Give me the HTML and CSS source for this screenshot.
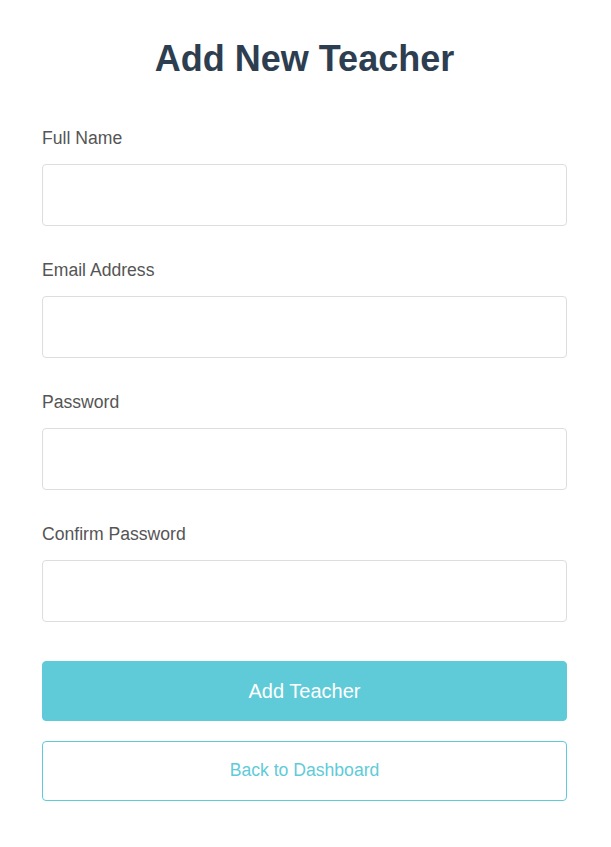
FILE: index.html
```html
<!DOCTYPE html>
<html lang="en">
<head>
<meta charset="utf-8">
<title>Add New Teacher</title>
<link rel="stylesheet" href="styles.css">
</head>
<body>
<main class="page">
  <h1 class="title">Add New Teacher</h1>
  <form class="form">
    <div class="field">
      <label class="label" for="name">Full Name</label>
      <input class="input" id="name" type="text">
    </div>
    <div class="field">
      <label class="label" for="email">Email Address</label>
      <input class="input" id="email" type="email">
    </div>
    <div class="field">
      <label class="label" for="pw">Password</label>
      <input class="input" id="pw" type="password">
    </div>
    <div class="field">
      <label class="label" for="pw2">Confirm Password</label>
      <input class="input" id="pw2" type="password">
    </div>
    <div class="actions">
      <button class="btn btn-primary" type="button">Add Teacher</button>
      <button class="btn btn-outline" type="button">Back to Dashboard</button>
    </div>
  </form>
</main>
</body>
</html>
```
FILE: styles.css
```css
* { box-sizing: border-box; }
html, body { margin: 0; padding: 0; background: #fff; }
body { font-family: "Liberation Sans", Arial, sans-serif; }
.page { padding: 38px 44px 0 42px; }
.title {
  margin: 0;
  text-align: center;
  font-size: 36px;
  line-height: 41px;
  font-weight: bold;
  color: #2c3e50;
}
.form { display: flex; flex-direction: column; margin-top: 49px; }
.field { display: flex; flex-direction: column; margin-bottom: 34px; }
.label {
  font-size: 17.6px;
  line-height: 20px;
  color: #555;
  margin-bottom: 16px;
}
.input {
  height: 62px;
  border: 1px solid #ddd;
  border-radius: 4px;
  background: #fff;
  font: inherit;
  padding: 0 12px;
}
.actions { display: flex; flex-direction: column; gap: 20px; margin-top: 5px; }
.btn {
  height: 60px;
  border-radius: 4px;
  font-family: inherit;
  cursor: pointer;
}
.btn-primary {
  background: #5fcbd8;
  border: 1px solid #5fcbd8;
  color: #fff;
  font-size: 20px;
}
.btn-outline {
  background: #fff;
  border: 1px solid #5fcbd8;
  color: #5fcbd8;
  font-size: 17.6px;
  padding-bottom: 2px;
}
```
